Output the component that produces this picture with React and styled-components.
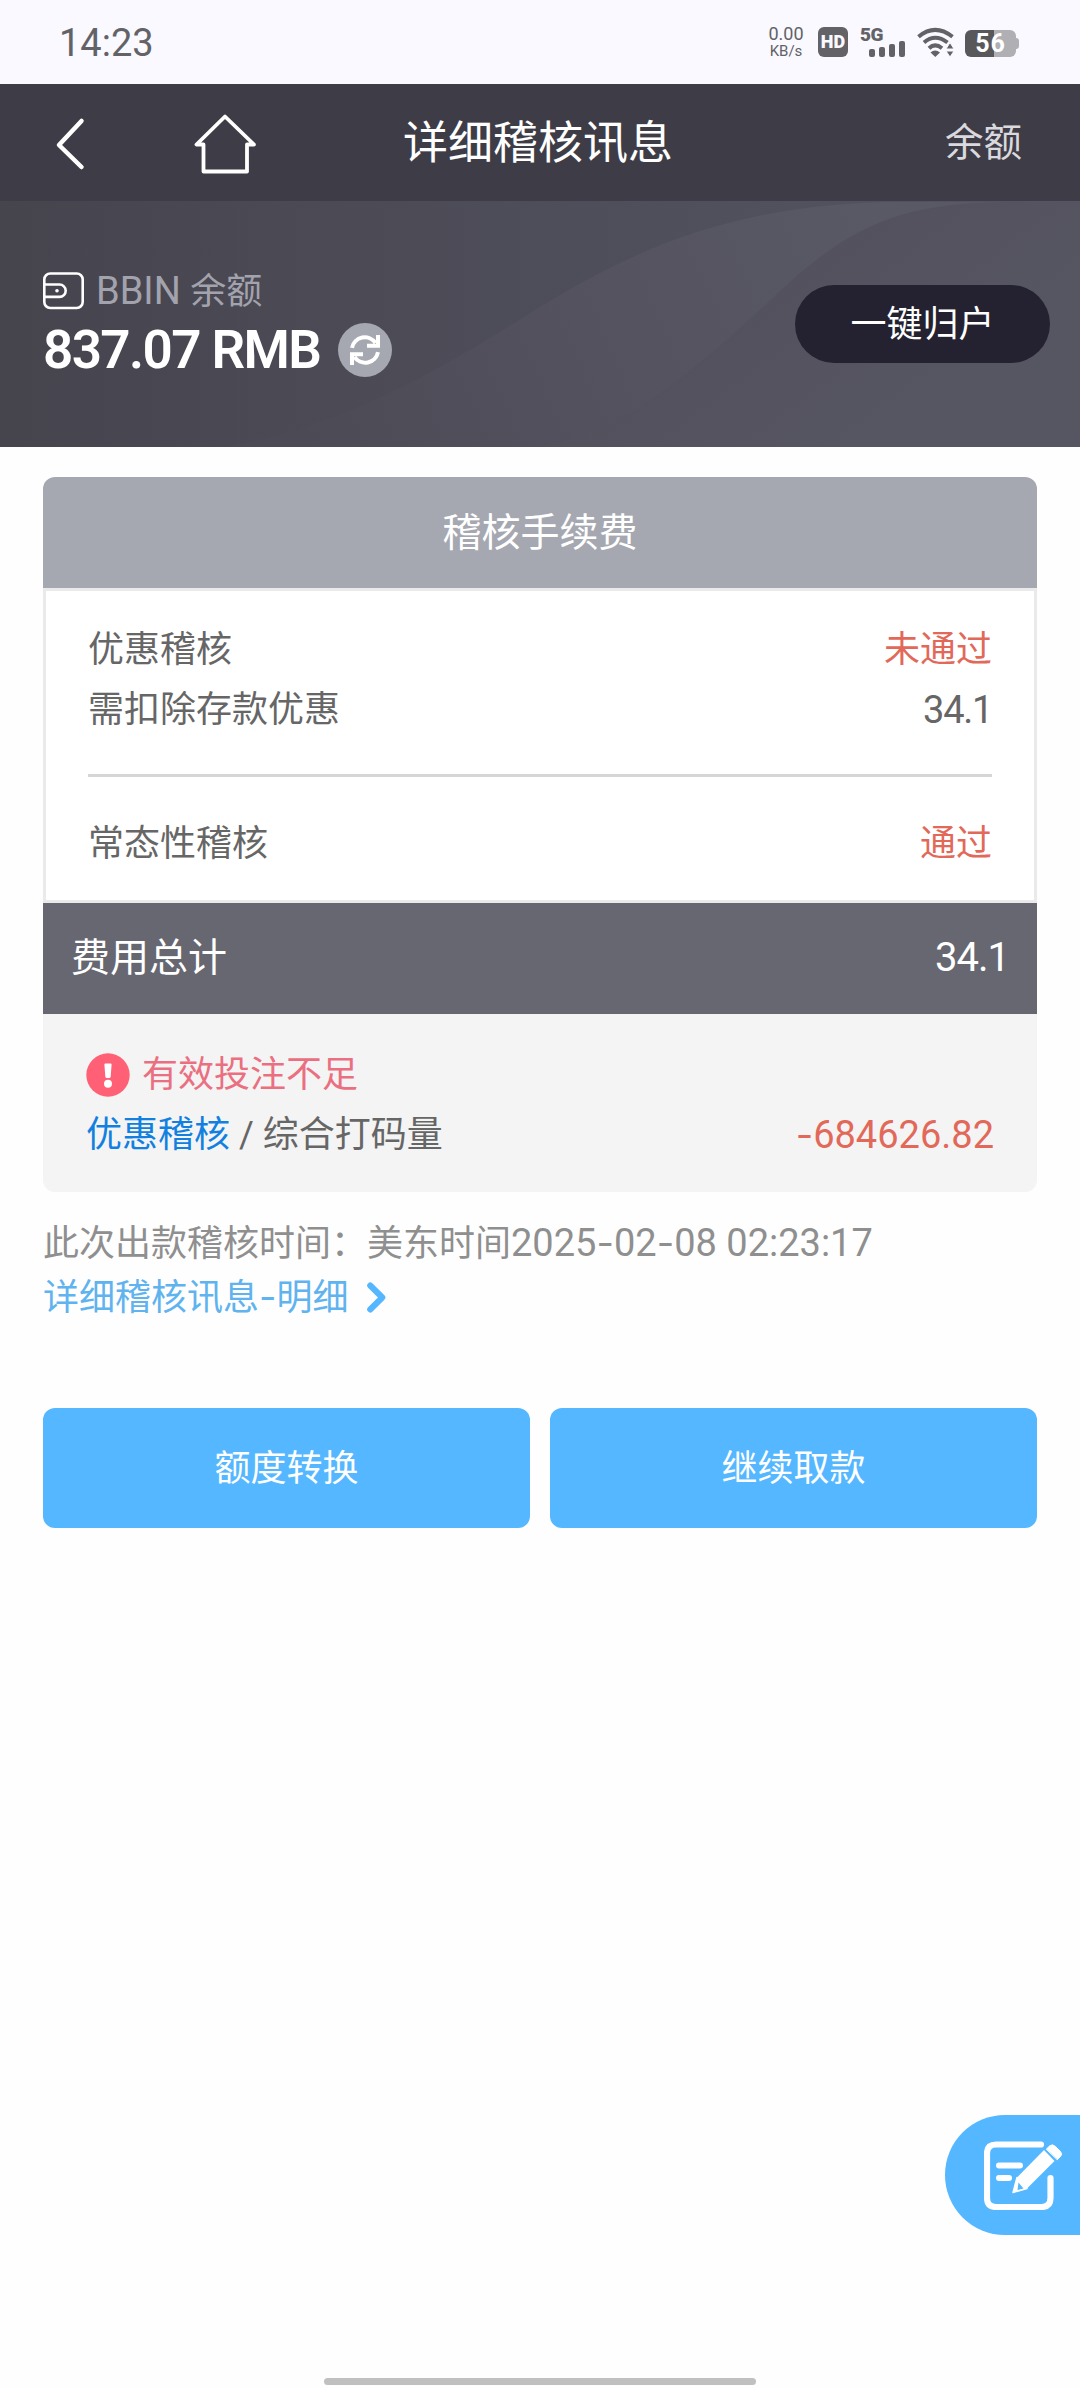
import React from "react";
import styled, { createGlobalStyle } from "styled-components";

const GlobalStyle = createGlobalStyle`
  * { box-sizing: border-box; }
  body { margin: 0; background: #fefefe; }
  button { border: 0; padding: 0; font: inherit; cursor: pointer; }
`;

const Screen = styled.div`
  width: 1080px;
  height: 2388px;
  display: flex;
  flex-direction: column;
  overflow: hidden;
  background: #fefefe;
  font-family: Roboto, "Noto Sans CJK SC", sans-serif;
  font-size: 36px;
  color: #666;
`;

/* Status bar */
const StatusBar = styled.header`
  height: 84px;
  flex: none;
  display: flex;
  align-items: center;
  justify-content: space-between;
  padding: 0 61px 0 59px;
  background: #f9f9ff;
  color: #626267;
`;
const Clock = styled.time`
  padding-top: 2px;
  font-size: 38px;
  line-height: 44px;
`;
const StatusIcons = styled.div`
  display: flex;
  align-items: center;
  height: 30px;
`;
const Speed = styled.div`
  display: flex;
  flex-direction: column;
  align-items: center;
  width: 38px;
  margin-right: 13px;
  font-size: 18px;
  line-height: 18px;
`;
const SpeedUnit = styled.span`
  font-size: 15px;
  line-height: 17px;
`;
const HdBadge = styled.div`
  width: 30px;
  height: 30px;
  margin-right: 12px;
  display: flex;
  align-items: center;
  justify-content: center;
  border-radius: 6px;
  background: #626267;
  color: #f9f9ff;
  font-size: 18px;
  font-weight: 900;
  line-height: 30px;
`;
const Cellular = styled.div`
  width: 45px;
  height: 30px;
  margin-right: 12px;
  display: flex;
  flex-direction: column;
`;
const CellularLabel = styled.span`
  height: 14px;
  font-size: 19px;
  line-height: 15px;
  font-weight: 900;
  letter-spacing: -0.5px;
`;
const Bars = styled.div`
  display: flex;
  align-items: flex-end;
  justify-content: flex-end;
  gap: 4px;
  height: 16px;
`;
const Bar = styled.i`
  width: 6px;
  height: ${(p) => p.$h}px;
  border-radius: 2px;
  background: #626267;
`;
const Battery = styled.div`
  display: flex;
  align-items: center;
  margin: 3px 0 0 10px;
`;
const BatteryBody = styled.div`
  width: 51px;
  height: 27px;
  display: flex;
  align-items: center;
  justify-content: center;
  border-radius: 6px;
  background: linear-gradient(90deg, #58585b 57%, #b0afb4 57%);
  color: #fff;
  font-size: 25px;
  line-height: 27px;
  font-weight: 700;
  letter-spacing: 1px;
`;
const BatteryTip = styled.i`
  width: 3px;
  height: 11px;
  border-radius: 0 3px 3px 0;
  background: #b0afb4;
`;

/* Navigation */
const NavBar = styled.nav`
  height: 117px;
  flex: none;
  display: grid;
  grid-template-columns: 1fr auto 1fr;
  align-items: center;
  padding: 0 58px 0 54px;
  background: #3e3d47;
  color: #fff;
`;
const NavIcons = styled.div`
  display: flex;
  align-items: center;
  gap: 106px;
  padding-top: 2px;
`;
const Title = styled.h1`
  margin: 2px 0 0;
  font-size: 45px;
  line-height: 60px;
  font-weight: 400;
`;
const NavLink = styled.span`
  justify-self: end;
  font-size: 38.5px;
  line-height: 50px;
  color: #dadade;
`;

/* Balance */
const Hero = styled.section`
  position: relative;
  height: 246px;
  flex: none;
  display: flex;
  justify-content: space-between;
  padding: 67px 30px 0 43px;
  background: linear-gradient(90deg, #46454e 0%, #4a4954 25%, #4f4f5b 60%, #555461 100%);
`;
const HeroArt = styled.svg`
  position: absolute;
  inset: 0;
`;
const Balance = styled.div`
  position: relative;
`;
const Wallet = styled.div`
  display: flex;
  align-items: center;
  gap: 11px;
  height: 46px;
  color: #a3a3ae;
`;
const WalletName = styled.span`
  font-size: 38px;
  line-height: 46px;
  white-space: pre;
`;
const Han = styled.span`
  font-size: 36px;
`;
const AmountRow = styled.div`
  display: flex;
  align-items: center;
  gap: 18px;
  height: 72px;
`;
const Amount = styled.strong`
  font-size: 53px;
  line-height: 74px;
  font-weight: 600;
  color: #fff;
  letter-spacing: -1.6px;
`;
const Refresh = styled.button`
  width: 54px;
  height: 54px;
  display: grid;
  place-items: center;
  border-radius: 50%;
  background: #a6a8b1;
`;
const Pill = styled.button`
  position: relative;
  width: 255px;
  height: 78px;
  margin-top: 17px;
  padding-top: 2px;
  border-radius: 39px;
  background: #242230;
  color: #fff;
  font-size: 36px;
  line-height: 52px;
`;

/* Audit card */
const Content = styled.main`
  padding: 30px 43px 0;
`;
const CardHead = styled.h2`
  height: 111px;
  margin: 0;
  display: flex;
  align-items: center;
  justify-content: center;
  border-radius: 12px 12px 0 0;
  background: #a6a8b1;
  color: #fff;
  font-size: 39px;
  line-height: 56px;
  font-weight: 400;
`;
const CardBody = styled.div`
  height: 315px;
  padding: 29px 42px 0;
  border: 3px solid #eaeaeb;
  background: #fff;
`;
const Row = styled.div`
  display: flex;
  align-items: center;
  justify-content: space-between;
  height: 60px;
  line-height: 60px;
`;
const Divider = styled.hr`
  height: 3px;
  margin: 34px 0 37px;
  border: 0;
  background: #d6d6d7;
`;
const Status = styled.span`
  color: #e2695a;
`;
const Num = styled.span`
  font-size: ${(p) => p.$size || 38}px;
  letter-spacing: ${(p) => p.$track || 0}px;
  color: ${(p) => p.$color || "inherit"};
`;
const Dash = styled.span`
  font-family: Inter, sans-serif;
  font-size: 38px;
  line-height: 1;
`;
const Total = styled.div`
  height: 111px;
  padding: 0 28px 1px 28px;
  display: flex;
  align-items: center;
  justify-content: space-between;
  background: #666771;
  color: #fff;
  font-size: 39px;
  line-height: 56px;
`;
const Warning = styled.div`
  height: 178px;
  padding: 30px 43px 0;
  border-radius: 0 0 12px 12px;
  background: #f4f4f4;
`;
const WarningTitle = styled.div`
  display: flex;
  align-items: center;
  gap: 12px;
  height: 61px;
  line-height: 61px;
  color: #ea6f80;
`;
const WarningText = styled.span`
  padding-top: 2px;
`;
const Accent = styled.span`
  color: #1180e0;
`;
const Meta = styled.p`
  margin: 22px 0 0;
  line-height: 58px;
  height: 58px;
  white-space: nowrap;
  color: #8f8f8f;
`;
const DetailLink = styled.a`
  display: flex;
  align-items: center;
  gap: 18px;
  height: 50px;
  color: #5fb3ee;
`;
const DetailText = styled.span`
  padding-top: 1px;
  line-height: 50px;
`;
const Actions = styled.div`
  display: grid;
  grid-template-columns: 1fr 1fr;
  gap: 20px;
  margin-top: 86px;
`;
const Action = styled.button`
  height: 120px;
  padding-top: 2px;
  border-radius: 12px;
  background: #54b7ff;
  color: #fff;
  font-size: 36px;
  line-height: 52px;
`;

/* Bottom */
const Bottom = styled.footer`
  margin-top: auto;
  display: flex;
  flex-direction: column;
  align-items: center;
  gap: 143px;
  padding-bottom: 3px;
`;
const NoteButton = styled.button`
  align-self: flex-end;
  width: 135px;
  height: 120px;
  display: flex;
  align-items: center;
  padding: 0 0 3px 39px;
  border-radius: 60px 0 0 60px;
  background: #54b7ff;
`;
const HomeIndicator = styled.div`
  width: 432px;
  height: 7px;
  border-radius: 4px;
  background: #c0c0c0;
`;

const BackIcon = () => (
  <svg width="34" height="54" viewBox="0 0 34 54" fill="none" stroke="#fff" strokeWidth="4.5" strokeLinecap="round" strokeLinejoin="round">
    <path d="M27.500 4 5 28l22.500 22" />
  </svg>
);
const HomeIcon = () => (
  <svg width="62" height="62" viewBox="0 0 62 62" fill="none" stroke="#fff" strokeWidth="3.8" strokeLinejoin="round">
    <path d="M31 3.500 2.500 31.500H9.500V58.500H53V31.500H60Z" />
  </svg>
);
const WifiIcon = () => (
  <svg width="38" height="30" viewBox="0 0 38 30" fill="none" stroke="#626267" strokeWidth="4">
    <path d="M1.500 9.800Q18 -4 35.500 9.800" />
    <path d="M7 15.500Q18 6 30.500 15.500" />
    <path d="M12 21.200Q18 15.500 25 21.200" />
    <path d="M13.500 25.500Q18 21.500 23 25.500L18.300 30Z" fill="#626267" stroke="none" />
    <path d="M29 22 33 15.500 37 22ZM29 24H37L33 30Z" fill="#626267" stroke="#f9f9ff" strokeWidth="1" />
  </svg>
);
const WalletIcon = () => (
  <svg width="42" height="38" viewBox="0 0 42 38" fill="none" stroke="#fff" strokeWidth="2.6">
    <rect x="1.300" y="1.500" width="38.400" height="34.500" rx="6" />
    <path d="M1.300 12.500H16.500a6.200 6.200 0 0 1 0 12.400H1.300" />
    <circle cx="14" cy="18.700" r="1.800" fill="#fff" stroke="none" />
  </svg>
);
const RefreshIcon = () => (
  <svg width="32" height="32" viewBox="0 0 32 32" fill="none" stroke="#fff" strokeWidth="4">
    <path d="M3 13.800A13 13 0 0 1 26.500 9" />
    <path d="M29 18.200A13 13 0 0 1 5.500 23" />
    <path d="M29 1V11.800H18" />
    <path d="M3 31V20.200H14" />
  </svg>
);
const AlertIcon = () => (
  <svg width="44" height="44" viewBox="0 0 44 44">
    <circle cx="22" cy="22" r="21.700" fill="#ff6075" />
    <path d="M18.400 11.500q0-1 1-1h5.200q1 0 1 1l-.9 12q-.1 1.500-1.500 1.500h-2.400q-1.400 0-1.500-1.500Z" fill="#fff" />
    <circle cx="22" cy="30.700" r="4" fill="#fff" />
  </svg>
);
const ChevronIcon = () => (
  <svg width="19" height="31" viewBox="0 0 19 31" fill="none" stroke="#54b7ff" strokeWidth="6" strokeLinecap="round" strokeLinejoin="round">
    <path d="M3.200 3.500 15.300 15.500 3.200 27.500" />
  </svg>
);
const NoteIcon = () => (
  <svg width="82" height="72" viewBox="0 0 82 72" fill="none" stroke="#fff" strokeWidth="6.200" strokeLinecap="round" strokeLinejoin="round">
    <path d="M57 6.500H12Q3 6.500 3 15.500V60Q3 69 12 69H57.500Q66.500 69 66.500 60V40" />
    <path d="M15 27.500H36M15 40H25" strokeWidth="6" />
    <path d="M60 12 70.500 23 43 50.500 29 54.500 33 39.500Z" fill="#fff" stroke="none" />
    <path d="M29 54.500 33 39.500 43 50.500Z" fill="#fff" stroke="#fff" strokeWidth="1.500" />
    <path d="M34.500 44.500 39.500 50.500 33.500 52Z" fill="#54b7ff" stroke="none" />
    <path d="M62.500 11 65.500 8Q68.500 5.500 71.500 8.500L76 13Q79 16 76.500 18.500L73.500 21.500Z" fill="#fff" stroke="#fff" strokeWidth="1" />
  </svg>
);

export default function App() {
  return (
    <Screen>
      <GlobalStyle />
      <StatusBar>
        <Clock>14:23</Clock>
        <StatusIcons>
          <Speed>
            <span>0.00</span>
            <SpeedUnit>KB/s</SpeedUnit>
          </Speed>
          <HdBadge>HD</HdBadge>
          <Cellular>
            <CellularLabel>5G</CellularLabel>
            <Bars>
              {[8, 10, 13, 16].map((h) => <Bar key={h} $h={h} />)}
            </Bars>
          </Cellular>
          <WifiIcon />
          <Battery>
            <BatteryBody>56</BatteryBody>
            <BatteryTip />
          </Battery>
        </StatusIcons>
      </StatusBar>

      <NavBar>
        <NavIcons>
          <BackIcon />
          <HomeIcon />
        </NavIcons>
        <Title>详细稽核讯息</Title>
        <NavLink>余额</NavLink>
      </NavBar>

      <Hero>
        <HeroArt width="1080" height="246" viewBox="0 0 1080 246">
          <defs>
            <linearGradient id="band" gradientUnits="userSpaceOnUse" x1="300" y1="240" x2="860" y2="0">
              <stop offset="0" stopColor="#4b4a55" />
              <stop offset=".5" stopColor="#53525e" />
              <stop offset="1" stopColor="#595865" />
            </linearGradient>
            <linearGradient id="fold" gradientUnits="userSpaceOnUse" x1="720" y1="60" x2="860" y2="246">
              <stop offset="0" stopColor="#51505b" />
              <stop offset="1" stopColor="#565562" />
            </linearGradient>
          </defs>
          <path d="M225 246C340 226 430 176 540 106C640 45 740 2 900 1H1080V246Z" fill="url(#band)" />
          <path d="M545 246C620 230 690 175 781 89C850 25 900 3 1000 1H1080V246Z" fill="url(#fold)" />
        </HeroArt>
        <Balance>
          <Wallet>
            <WalletIcon />
            <WalletName>BBIN <Han>余额</Han></WalletName>
          </Wallet>
          <AmountRow>
            <Amount>837.07 RMB</Amount>
            <Refresh aria-label="refresh"><RefreshIcon /></Refresh>
          </AmountRow>
        </Balance>
        <Pill>一键归户</Pill>
      </Hero>

      <Content>
        <CardHead>稽核手续费</CardHead>
        <CardBody>
          <Row><span>优惠稽核</span><Status>未通过</Status></Row>
          <Row><span>需扣除存款优惠</span><Num $track={-1.3}>34.1</Num></Row>
          <Divider />
          <Row><span>常态性稽核</span><Status>通过</Status></Row>
        </CardBody>
        <Total><span>费用总计</span><Num $size={40} $track={-1}>34.1</Num></Total>
        <Warning>
          <WarningTitle><AlertIcon /><WarningText>有效投注不足</WarningText></WarningTitle>
          <Row>
            <span><Accent>优惠稽核</Accent> / 综合打码量</span>
            <Num $color="#e2695a"><Dash>-</Dash>684626.82</Num>
          </Row>
        </Warning>
        <Meta>此次出款稽核时间：美东时间<Num>2025<Dash>-</Dash>02<Dash>-</Dash>08 02:23:17</Num></Meta>
        <DetailLink>
          <DetailText>详细稽核讯息<Dash>-</Dash>明细</DetailText>
          <ChevronIcon />
        </DetailLink>
        <Actions>
          <Action>额度转换</Action>
          <Action>继续取款</Action>
        </Actions>
      </Content>

      <Bottom>
        <NoteButton aria-label="note"><NoteIcon /></NoteButton>
        <HomeIndicator />
      </Bottom>
    </Screen>
  );
}
